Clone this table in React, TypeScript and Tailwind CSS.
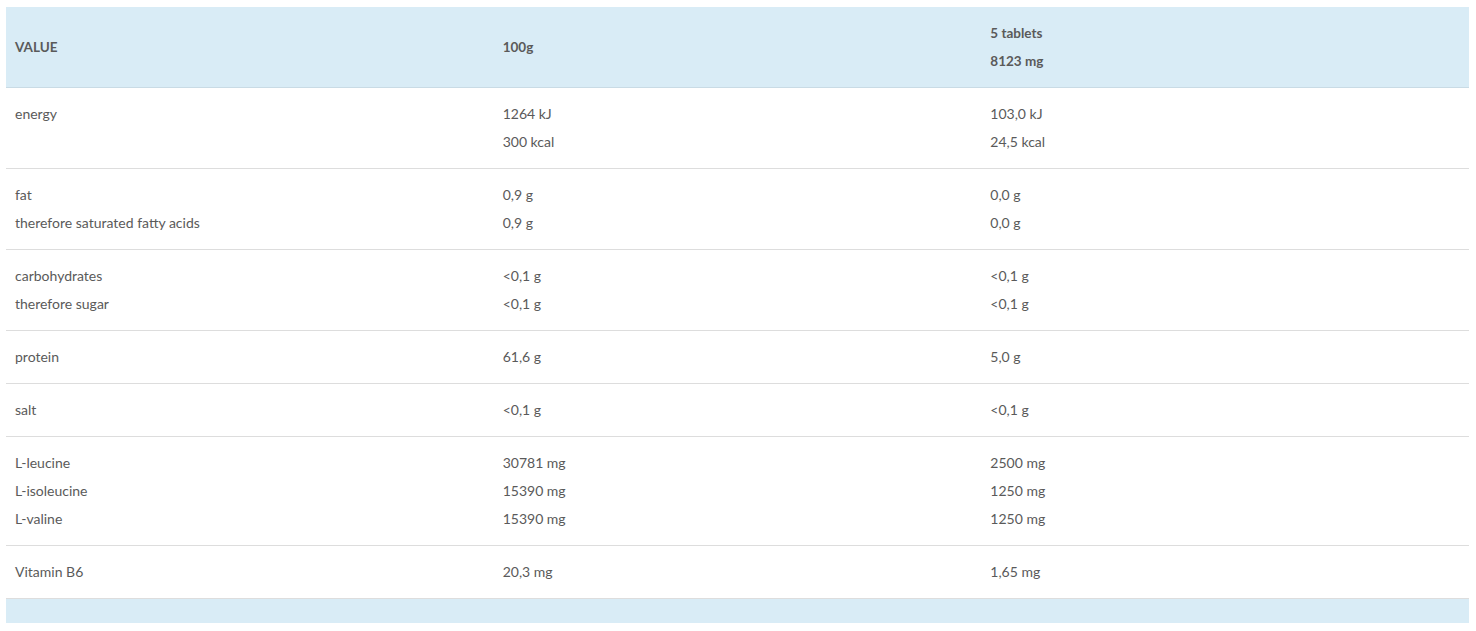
import React from "react";

type Row = { label: string[]; a: string[]; b: string[] };

const rows: Row[] = [
  { label: ["energy", ""], a: ["1264 kJ", "300 kcal"], b: ["103,0 kJ", "24,5 kcal"] },
  { label: ["fat", "therefore saturated fatty acids"], a: ["0,9 g", "0,9 g"], b: ["0,0 g", "0,0 g"] },
  { label: ["carbohydrates", "therefore sugar"], a: ["<0,1 g", "<0,1 g"], b: ["<0,1 g", "<0,1 g"] },
  { label: ["protein"], a: ["61,6 g"], b: ["5,0 g"] },
  { label: ["salt"], a: ["<0,1 g"], b: ["<0,1 g"] },
  { label: ["L-leucine", "L-isoleucine", "L-valine"], a: ["30781 mg", "15390 mg", "15390 mg"], b: ["2500 mg", "1250 mg", "1250 mg"] },
  { label: ["Vitamin B6"], a: ["20,3 mg"], b: ["1,65 mg"] },
];

function Cell({ lines }: { lines: string[] }) {
  return (
    <td className="align-top px-[9px] py-[12px]">
      {lines.map((l, i) => (
        <div key={i} className="h-[28px] leading-[28px]">
          {l}
        </div>
      ))}
    </td>
  );
}

export default function App() {
  return (
    <div
      className="bg-white min-h-[631px] pt-[7px] pl-[6px] pr-[7px] text-[14px] text-[#5a5a5a]"
      style={{ fontFamily: "Lato, 'Noto Sans', sans-serif" }}
    >
      <table className="w-full table-fixed border-collapse">
        <thead>
          <tr className="bg-[#d9ecf6] border-b border-[#c9dbe5] font-bold text-[13.5px]">
            <td className="align-middle px-[9px] py-[12px]">VALUE</td>
            <td className="align-middle px-[9px] py-[12px]">100g</td>
            <td className="align-top px-[9px] py-[12px]">
              <div className="h-[28px] leading-[28px]">5 tablets</div>
              <div className="h-[28px] leading-[28px]">8123 mg</div>
            </td>
          </tr>
        </thead>
        <tbody>
          {rows.map((r, i) => (
            <tr key={i} className="border-b border-[#dddddd]">
              <Cell lines={r.label} />
              <Cell lines={r.a} />
              <Cell lines={r.b} />
            </tr>
          ))}
        </tbody>
        <tfoot>
          <tr className="bg-[#d9ecf6]">
            <td className="h-[24px]" colSpan={3}></td>
          </tr>
        </tfoot>
      </table>
    </div>
  );
}
